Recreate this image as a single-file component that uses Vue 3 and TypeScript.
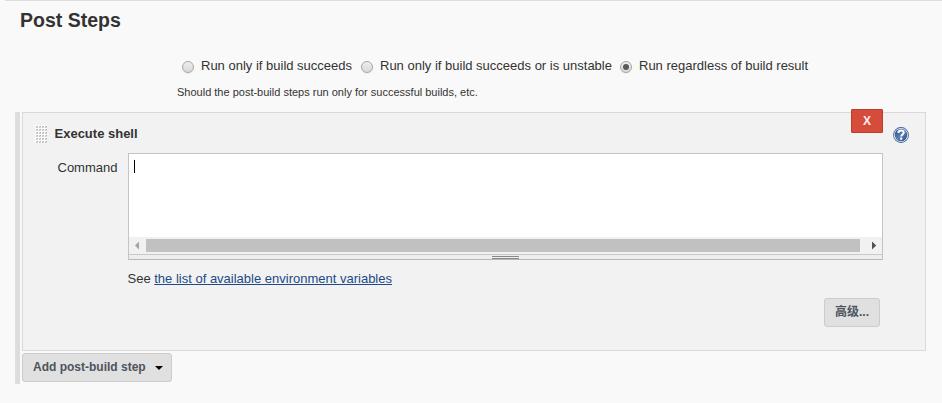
<script setup lang="ts">
import { ref } from 'vue'

interface RunOption {
  id: string
  label: string
}

const options: RunOption[] = [
  { id: 'success', label: 'Run only if build succeeds' },
  { id: 'unstable', label: 'Run only if build succeeds or is unstable' },
  { id: 'always', label: 'Run regardless of build result' },
]
const selected = ref<string>('always')
</script>

<template>
  <main class="page">
    <h2 class="title">Post Steps</h2>

    <div class="options" role="radiogroup">
      <label v-for="o in options" :key="o.id" class="option" :class="o.id" @click="selected = o.id">
        <span class="radio" role="radio" :aria-checked="selected === o.id">
          <span v-if="selected === o.id" class="dot"></span>
        </span>
        <span class="option-text">{{ o.label }}</span>
      </label>
    </div>
    <p class="hint"><span>Should the post-build steps run only for successful builds, etc.</span></p>

    <div class="steps">
      <section class="card">
        <header class="card-head">
          <svg class="grip" width="12" height="18" viewBox="0 0 12 18" shape-rendering="crispEdges">
            <rect width="12" height="18" fill="#fbfbfb" />
            <template v-for="row in 6" :key="row">
              <template v-for="col in 4" :key="col">
                <rect :x="col * 3 - 2" :y="row * 3 - 2" width="2" height="2" fill="#d6d6d6" />
                <rect :x="col * 3 - 1" :y="row * 3 - 2" width="1" height="1" fill="#b4b4b4" />
                <rect :x="col * 3 - 2" :y="row * 3 - 1" width="1" height="1" fill="#c4c4c4" />
              </template>
            </template>
          </svg>
          <b class="card-title">Execute shell</b>
          <button class="delete" type="button"><span>X</span></button>
          <svg class="help" width="16" height="16" viewBox="0 0 16 16">
            <defs>
              <linearGradient id="help-fill" x1="0" y1="0" x2="1" y2="1">
                <stop offset="0" stop-color="#1f4585" />
                <stop offset="0.5" stop-color="#5b7fb2" />
                <stop offset="1" stop-color="#23498a" />
              </linearGradient>
            </defs>
            <circle cx="8" cy="8" r="7.9" fill="#3c609a" />
            <circle cx="8" cy="8" r="7.1" fill="#f4f7fb" />
            <circle cx="8" cy="8" r="6.3" fill="url(#help-fill)" />
            <path d="M5.3 6C5.4 4.3 6.4 3.5 8.1 3.5C9.8 3.5 10.7 4.4 10.7 5.7C10.7 7.4 8.2 7.5 8.2 9.6" fill="none" stroke="#fff" stroke-width="2" />
            <rect x="7.1" y="10.5" width="2.2" height="2.2" fill="#fff" />
          </svg>
        </header>

        <div class="field">
          <span class="field-label"><span>Command</span></span>
          <div class="editor">
            <div class="code"><span class="caret"></span></div>
            <div class="scrollbar">
              <svg width="17" height="17" viewBox="0 0 17 17"><path d="M10 4.5v8L6 8.5z" fill="#a3a3a3" /></svg>
              <span class="thumb"></span>
              <svg class="right" width="17" height="17" viewBox="0 0 17 17"><path d="M7 4.5v8l4.2-4z" fill="#505050" /></svg>
            </div>
            <div class="resize"><span class="resize-grip"></span></div>
          </div>
        </div>

        <p class="see"><span>See <a href="#">the list of available environment variables</a></span></p>
        <div class="actions"><button class="btn advanced" type="button">高级...</button></div>
      </section>
      <button class="btn add" type="button">
        <span>Add post-build step</span>
        <svg width="8" height="4" viewBox="0 0 8 4"><path d="M0 0h8L4 4z" fill="#000" /></svg>
      </button>
    </div>
  </main>
</template>

<style>
body {
  background: #f9f9f9;
}
</style>

<style scoped>
.page {
  box-sizing: border-box;
  width: 942px;
  height: 403px;
  overflow: hidden;
  background: #f9f9f9;
  color: #333;
  font: 13px/16px "Liberation Sans", Arial, "Noto Sans CJK SC", sans-serif;
}
.page * {
  box-sizing: border-box;
}
.title {
  margin: 0 0 0 5px;
  padding: 7px 0 0 15px;
  height: 58px;
  border-top: 1px solid #ddd;
  font-size: 19.5px;
  line-height: 24px;
}
.options {
  display: flex;
  padding-left: 182px;
  height: 27px;
}
.option {
  display: flex;
}
.success {
  width: 179px;
}
.unstable {
  width: 259px;
}
.radio {
  display: flex;
  align-items: center;
  justify-content: center;
  width: 12px;
  height: 12px;
  margin: 3px 7px 0 0;
  border: 1px solid #a6a6a6;
  border-radius: 50%;
  background: linear-gradient(#eee, #d9d9d9);
  box-shadow: 0 1px 0 #ececec;
}
.dot {
  width: 6px;
  height: 6px;
  border-radius: 50%;
  background: #5a5a5a;
}
.option-text {
  white-space: nowrap;
}
.hint {
  margin: 0;
  padding-left: 177px;
  height: 27px;
  font-size: 11px;
  line-height: 14px;
}
.steps {
  margin-left: 15px;
  width: 911px;
  height: 272px;
  padding-left: 2px;
  border-left: 5px solid #ddd;
}
.card {
  width: 904px;
  height: 239px;
  border: 1px solid #d9d9d9;
  background: #f2f2f2;
}
.card-head {
  display: flex;
  height: 40px;
  padding-left: 12px;
}
.grip {
  margin-top: 12px;
}
.card-title {
  width: 796.5px;
  margin: 13px 0 0 7.5px;
}
.delete {
  width: 32px;
  height: 24px;
  margin: -4px 0 0;
  padding: 0;
  border: 1px solid #c43b2d;
  border-radius: 1px;
  background: #d54c3a;
  color: #f8eeee;
  font: bold 12px/21px "Liberation Sans", Arial, sans-serif;
}
.help {
  margin: 14px 0 0 10px;
}
.field {
  display: flex;
}
.field-label {
  width: 105px;
  padding: 7px 0 0 34.5px;
}
.editor {
  width: 755px;
  height: 107px;
  border: 1px solid #c4c4c4;
  border-bottom-color: #b8b8b0;
}
.code {
  height: 83px;
  padding: 6px 0 0 5px;
  background: #fff;
}
.caret {
  display: block;
  width: 1px;
  height: 13px;
  background: #000;
}
.scrollbar {
  display: flex;
  height: 17px;
  background: #f1f1f1;
}
.thumb {
  width: 714px;
  height: 13px;
  margin-top: 2px;
  background: #c1c1c1;
}
.right {
  margin-left: 5px;
}
.resize {
  display: flex;
  justify-content: center;
  height: 5px;
  border-top: 1px solid #c9c9c9;
  background: #eee;
}
.resize-grip {
  width: 27px;
  height: 3px;
  margin-top: 1px;
  border-top: 1px solid #888;
  border-bottom: 1px solid #888;
}
.see {
  margin: 11px 0 0 104.5px;
  height: 16px;
}
.see a {
  color: #204a87;
}
.actions {
  display: flex;
  justify-content: flex-end;
  padding: 11px 45px 0 0;
}
.btn {
  display: flex;
  align-items: center;
  border: 1px solid #ccc;
  border-radius: 3px;
  background: #e0e0e0;
  color: #4d545d;
  font: bold 12px/16px "Liberation Sans", Arial, "Noto Sans CJK SC", sans-serif;
}
.advanced {
  width: 56px;
  height: 29px;
  padding: 0 0 1px 10px;
}
.add {
  width: 150px;
  height: 29px;
  margin-top: 2px;
  padding: 0 0 1px 10px;
}
.add span {
  width: 122px;
  text-align: left;
}
.add svg {
  margin-top: 2px;
}
</style>
